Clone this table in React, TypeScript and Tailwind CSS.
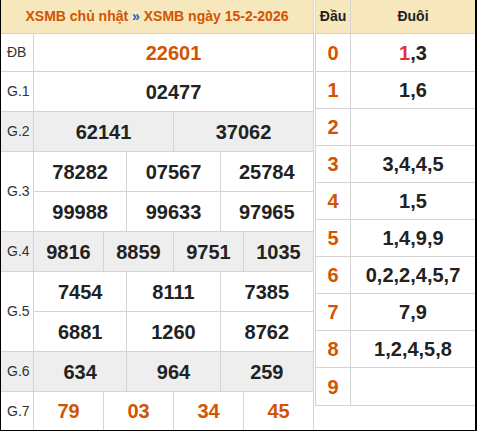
import React from 'react'

type PrizeProps = {
  label: string
  lines: string[][]
  gray?: boolean
  hot?: boolean
  h: string
  last?: boolean
}

function Prize({ label, lines, gray, hot, h, last }: PrizeProps) {
  return (
    <div className={`flex ${h} ${last ? '' : 'border-b border-[#d4d4d4]'} ${gray ? 'bg-[#eeeeee]' : 'bg-white'}`}>
      <div className="w-[33px] shrink-0 border-r border-[#d4d4d4] flex items-center pl-[6px] text-[14px] text-[#333]">
        {label}
      </div>
      <div className="flex-1 flex flex-col">
        {lines.map((line, i) => (
          <div key={i} className={`flex flex-1 ${i < lines.length - 1 ? 'border-b border-[#d4d4d4]' : ''}`}>
            {line.map((n, j) => (
              <div
                key={j}
                className={`flex-1 basis-0 flex items-center justify-center text-[20px] font-bold ${hot ? 'text-[#d35400]' : 'text-[#222]'} ${j > 0 ? 'border-l border-[#d4d4d4]' : ''}`}
              >
                {n}
              </div>
            ))}
          </div>
        ))}
      </div>
    </div>
  )
}

const loto: { head: string; tail: React.ReactNode }[] = [
  { head: '0', tail: <><span className="text-[#e0303a]">1</span>,3</> },
  { head: '1', tail: '1,6' },
  { head: '2', tail: '' },
  { head: '3', tail: '3,4,4,5' },
  { head: '4', tail: '1,5' },
  { head: '5', tail: '1,4,9,9' },
  { head: '6', tail: '0,2,2,4,5,7' },
  { head: '7', tail: '7,9' },
  { head: '8', tail: '1,2,4,5,8' },
  { head: '9', tail: '' },
]

export default function App() {
  return (
    <div className="w-[477px] h-[431px] flex bg-white border-l border-r-2 border-b border-black font-['Liberation_Sans',Arial,sans-serif]">
      {/* bảng kết quả */}
      <div className="w-[313px] shrink-0 border-r border-[#d4d4d4] flex flex-col">
        <div className="h-[34px] shrink-0 bg-[#f6e7bd] border-b border-[#d4d4d4] flex items-center justify-center text-[14px] font-bold text-[#d35400]">
          XSMB chủ nhật&nbsp;<span className="text-[#1f5fbf]">»</span>&nbsp;XSMB ngày 15-2-2026
        </div>
        <Prize label="ĐB" lines={[['22601']]} hot h="h-[38px]" />
        <Prize label="G.1" lines={[['02477']]} h="h-[40px]" />
        <Prize label="G.2" lines={[['62141', '37062']]} gray h="h-[40px]" />
        <Prize label="G.3" lines={[['78282', '07567', '25784'], ['99988', '99633', '97965']]} h="h-[80px]" />
        <Prize label="G.4" lines={[['9816', '8859', '9751', '1035']]} gray h="h-[40px]" />
        <Prize label="G.5" lines={[['7454', '8111', '7385'], ['6881', '1260', '8762']]} h="h-[80px]" />
        <Prize label="G.6" lines={[['634', '964', '259']]} gray h="h-[40px]" />
        <Prize label="G.7" lines={[['79', '03', '34', '45']]} hot h="h-[38px]" last />
      </div>

      {/* bảng lô tô */}
      <div className="ml-[1px] w-[160px] shrink-0 self-start border-l border-b border-[#d4d4d4] flex flex-col">
        <div className="h-[34px] flex bg-[#f6e7bd] border-b border-[#d4d4d4] text-[14px] font-bold text-[#222]">
          <div className="w-[35px] border-r border-[#d4d4d4] flex items-center justify-center">Đầu</div>
          <div className="flex-1 flex items-center justify-center">Đuôi</div>
        </div>
        {loto.map((r, i) => (
          <div
            key={r.head}
            className={`flex ${i === 0 ? 'h-[38px]' : 'h-[37px]'} ${i < loto.length - 1 ? 'border-b border-[#d4d4d4]' : ''} text-[20px] font-bold`}
          >
            <div className="w-[35px] border-r border-[#d4d4d4] flex items-center justify-center text-[#d35400]">{r.head}</div>
            <div className="flex-1 flex items-center justify-center text-[#222]">{r.tail}</div>
          </div>
        ))}
      </div>
    </div>
  )
}
